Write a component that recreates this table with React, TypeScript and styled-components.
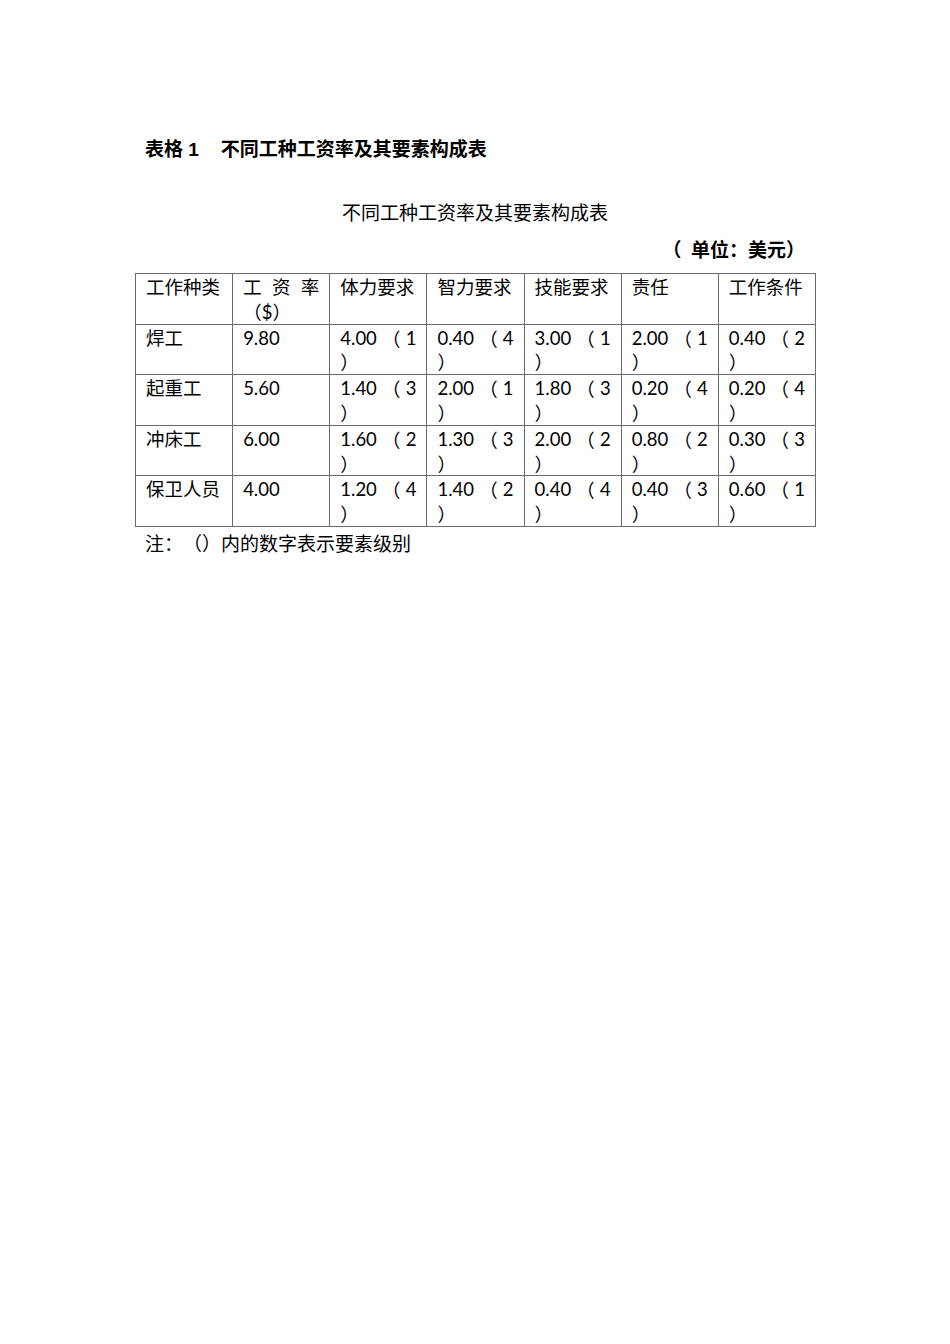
import { FC } from "react";
import styled, { createGlobalStyle } from "styled-components";

const GlobalStyle = createGlobalStyle`
    html, body {
        margin: 0;
        padding: 0;
        background: #ffffff;
    }
    body {
        font-family: Lato, "Noto Sans CJK SC", sans-serif;
        color: #000000;
        text-spacing-trim: space-all;
    }
`;

const cjk = `"Noto Sans CJK SC", sans-serif`;

const Page = styled.main`
    width: 950px;
    min-height: 1344px;
    box-sizing: border-box;
    padding: 137px 145px 0;
`;

const Caption = styled.h1`
    margin: 0;
    font-size: 19px;
    line-height: 26px;
    font-weight: 700;
    font-family: "Liberation Sans", "Noto Sans CJK SC", sans-serif;
`;

const CaptionName = styled.span`
    margin-left: 22px;
`;

const TableTitle = styled.p`
    margin: 36px 0 0;
    text-align: center;
    font-family: ${cjk};
    font-size: 19px;
    line-height: 26px;
`;

const Unit = styled.p`
    margin: 11px 0 0;
    text-align: right;
    font-family: ${cjk};
    font-size: 19px;
    line-height: 26px;
    font-weight: 700;
`;

const Table = styled.table`
    margin: 11px 0 0 -10px;
    width: 681px;
    border-collapse: collapse;
    table-layout: fixed;
`;

const Cell = styled.td`
    border: 1px solid #6a6a6a;
    padding: 2px 10px 0;
    vertical-align: top;
    font-size: 18.5px;
    line-height: 23.8px;
    font-weight: 400;
    text-align: left;
`;

/* one text line of a cell, fixed so mixed fonts don't stretch the row */
const Line = styled.div`
    height: 23.8px;
    white-space: nowrap;
`;

const Spread = styled(Line)`
    display: flex;
    justify-content: space-between;
`;

/* full-width punctuation must come from the CJK font, Lato has its own narrow ones */
const Wide = styled.span`
    font-family: ${cjk};
`;

const Note = styled.p`
    margin: 4px 0 0;
    font-family: ${cjk};
    font-size: 19px;
    line-height: 24px;
`;

type Score = { value: string; level: number };

const rows: { job: string; rate: string; scores: Score[] }[] = [
    {
        job: "焊工",
        rate: "9.80",
        scores: [
            { value: "4.00", level: 1 },
            { value: "0.40", level: 4 },
            { value: "3.00", level: 1 },
            { value: "2.00", level: 1 },
            { value: "0.40", level: 2 }
        ]
    },
    {
        job: "起重工",
        rate: "5.60",
        scores: [
            { value: "1.40", level: 3 },
            { value: "2.00", level: 1 },
            { value: "1.80", level: 3 },
            { value: "0.20", level: 4 },
            { value: "0.20", level: 4 }
        ]
    },
    {
        job: "冲床工",
        rate: "6.00",
        scores: [
            { value: "1.60", level: 2 },
            { value: "1.30", level: 3 },
            { value: "2.00", level: 2 },
            { value: "0.80", level: 2 },
            { value: "0.30", level: 3 }
        ]
    },
    {
        job: "保卫人员",
        rate: "4.00",
        scores: [
            { value: "1.20", level: 4 },
            { value: "1.40", level: 2 },
            { value: "0.40", level: 4 },
            { value: "0.40", level: 3 },
            { value: "0.60", level: 1 }
        ]
    }
];

const factors = ["体力要求", "智力要求", "技能要求", "责任", "工作条件"];

const ScoreCell: FC<Score> = ({ value, level }) => (
    <Cell>
        <Spread>
            <span>{value}</span>
            <Wide>（</Wide>
            <span>{level}</span>
        </Spread>
        <Line>
            <Wide>）</Wide>
        </Line>
    </Cell>
);

export default function App() {
    return (
        <>
            <GlobalStyle />
            <Page>
                <Caption>
                    表格 1<CaptionName>不同工种工资率及其要素构成表</CaptionName>
                </Caption>
                <TableTitle>不同工种工资率及其要素构成表</TableTitle>
                <Unit>（&#8194;单位：美元）</Unit>
                <Table>
                    <tbody>
                        <tr>
                            <Cell as="th">
                                <Line>工作种类</Line>
                            </Cell>
                            <Cell as="th">
                                <Spread>
                                    <span>工</span>
                                    <span>资</span>
                                    <span>率</span>
                                </Spread>
                                <Line>
                                    <Wide>（</Wide>$<Wide>）</Wide>
                                </Line>
                            </Cell>
                            {factors.map((f) => (
                                <Cell as="th" key={f}>
                                    <Line>{f}</Line>
                                </Cell>
                            ))}
                        </tr>
                        {rows.map((r) => (
                            <tr key={r.job}>
                                <Cell>
                                    <Line>{r.job}</Line>
                                </Cell>
                                <Cell>
                                    <Line>{r.rate}</Line>
                                </Cell>
                                {r.scores.map((s, i) => (
                                    <ScoreCell key={i} {...s} />
                                ))}
                            </tr>
                        ))}
                    </tbody>
                </Table>
                <Note>注：（）内的数字表示要素级别</Note>
            </Page>
        </>
    );
}
